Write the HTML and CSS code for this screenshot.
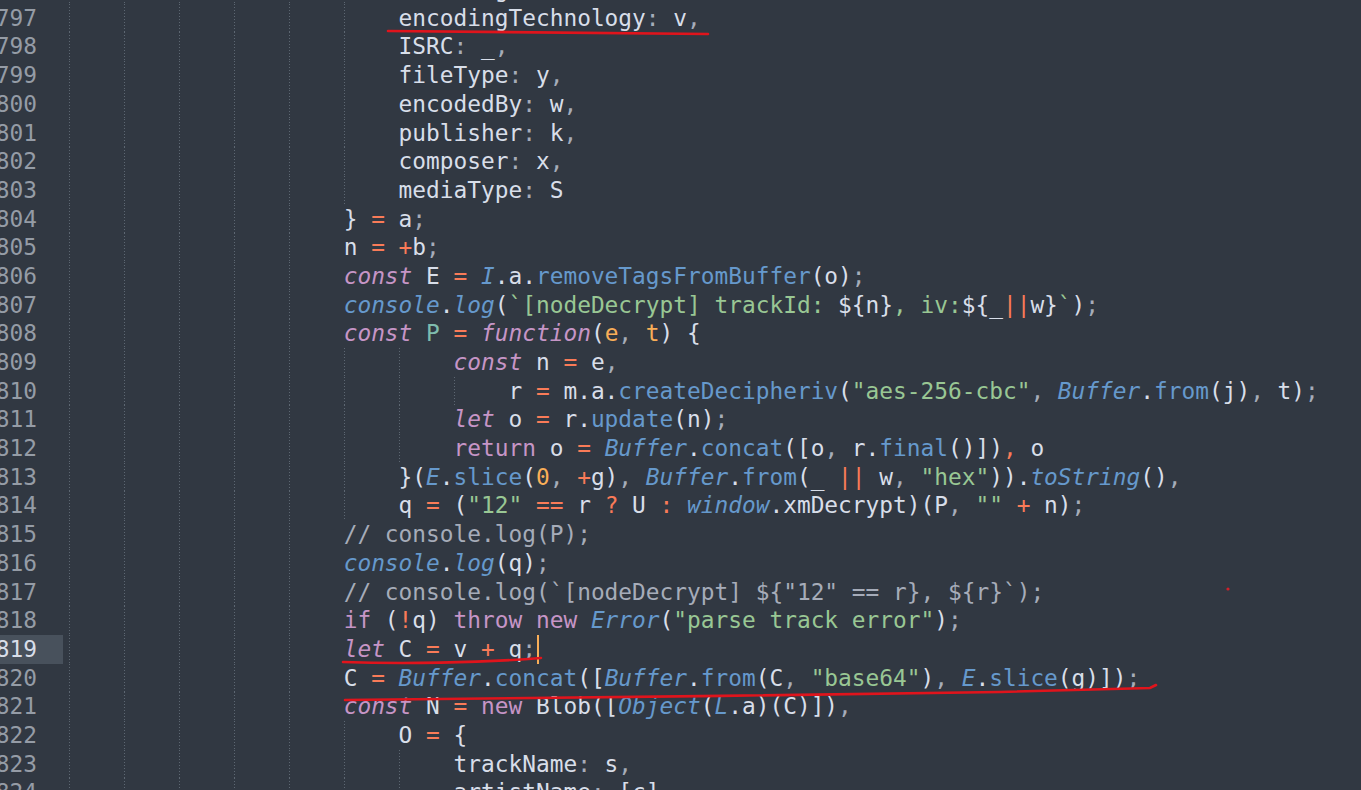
FILE: index.html
```html
<!DOCTYPE html>
<html>
<head>
<meta charset="utf-8">
<link rel="stylesheet" href="styles.css">
</head>
<body>
<div class="editor">
<div class="row"><span class="ln">796</span><span class="code"><span class="ind i6"></span>album<span class="pu">:</span> g<span class="pu">,</span></span></div>
<div class="row"><span class="ln">797</span><span class="code"><span class="ind i6"></span>encodingTechnology<span class="pu">:</span> v<span class="pu">,</span></span></div>
<div class="row"><span class="ln">798</span><span class="code"><span class="ind i6"></span>ISRC<span class="pu">:</span> _<span class="pu">,</span></span></div>
<div class="row"><span class="ln">799</span><span class="code"><span class="ind i6"></span>fileType<span class="pu">:</span> y<span class="pu">,</span></span></div>
<div class="row"><span class="ln">800</span><span class="code"><span class="ind i6"></span>encodedBy<span class="pu">:</span> w<span class="pu">,</span></span></div>
<div class="row"><span class="ln">801</span><span class="code"><span class="ind i6"></span>publisher<span class="pu">:</span> k<span class="pu">,</span></span></div>
<div class="row"><span class="ln">802</span><span class="code"><span class="ind i6"></span>composer<span class="pu">:</span> x<span class="pu">,</span></span></div>
<div class="row"><span class="ln">803</span><span class="code"><span class="ind i6"></span>mediaType<span class="pu">:</span> S</span></div>
<div class="row"><span class="ln">804</span><span class="code"><span class="ind i5"></span>} <span class="o">=</span> a<span class="pu">;</span></span></div>
<div class="row"><span class="ln">805</span><span class="code"><span class="ind i5"></span>n <span class="o">=</span> <span class="o">+</span>b<span class="pu">;</span></span></div>
<div class="row"><span class="ln">806</span><span class="code"><span class="ind i5"></span><span class="k">const</span> E <span class="o">=</span> <span class="fi">I</span>.a.<span class="f">removeTagsFromBuffer</span>(o)<span class="pu">;</span></span></div>
<div class="row"><span class="ln">807</span><span class="code"><span class="ind i5"></span><span class="fi">console</span>.<span class="fi">log</span>(<span class="s">`[nodeDecrypt] trackId: </span>${n}<span class="s">, iv:</span>${_<span class="o">||</span>w}<span class="s">`</span>)<span class="pu">;</span></span></div>
<div class="row"><span class="ln">808</span><span class="code"><span class="ind i5"></span><span class="k">const</span> <span class="fn">P</span> <span class="o">=</span> <span class="k">function</span>(<span class="p">e</span><span class="pu">,</span> <span class="p">t</span>) {</span></div>
<div class="row"><span class="ln">809</span><span class="code"><span class="ind i7"></span><span class="k">const</span> n <span class="o">=</span> e<span class="pu">,</span></span></div>
<div class="row"><span class="ln">810</span><span class="code"><span class="ind i8"></span>r <span class="o">=</span> m.a.<span class="f">createDecipheriv</span>(<span class="s">"aes-256-cbc"</span><span class="pu">,</span> <span class="fi">Buffer</span>.<span class="f">from</span>(j)<span class="pu">,</span> t)<span class="pu">;</span></span></div>
<div class="row"><span class="ln">811</span><span class="code"><span class="ind i7"></span><span class="k">let</span> o <span class="o">=</span> r.<span class="f">update</span>(n)<span class="pu">;</span></span></div>
<div class="row"><span class="ln">812</span><span class="code"><span class="ind i7"></span><span class="kw">return</span> o <span class="o">=</span> <span class="fi">Buffer</span>.<span class="f">concat</span>([o<span class="pu">,</span> r.<span class="f">final</span>()])<span class="o">,</span> o</span></div>
<div class="row"><span class="ln">813</span><span class="code"><span class="ind i6"></span>}(<span class="fi">E</span>.<span class="f">slice</span>(<span class="p">0</span><span class="pu">,</span> <span class="o">+</span>g)<span class="pu">,</span> <span class="fi">Buffer</span>.<span class="f">from</span>(_ <span class="o">||</span> w<span class="pu">,</span> <span class="s">"hex"</span>)).<span class="fi">toString</span>()<span class="pu">,</span></span></div>
<div class="row"><span class="ln">814</span><span class="code"><span class="ind i6"></span>q <span class="o">=</span> (<span class="s">"12"</span> <span class="o">==</span> r <span class="o">?</span> U <span class="o">:</span> <span class="fi">window</span>.xmDecrypt)(P<span class="pu">,</span> <span class="s">""</span> <span class="o">+</span> n)<span class="pu">;</span></span></div>
<div class="row"><span class="ln">815</span><span class="code"><span class="ind i5"></span><span class="c">// console.log(P);</span></span></div>
<div class="row"><span class="ln">816</span><span class="code"><span class="ind i5"></span><span class="fi">console</span>.<span class="fi">log</span>(q)<span class="pu">;</span></span></div>
<div class="row"><span class="ln">817</span><span class="code"><span class="ind i5"></span><span class="c">// console.log(`[nodeDecrypt] ${"12" == r}, ${r}`);</span></span></div>
<div class="row"><span class="ln">818</span><span class="code"><span class="ind i5"></span><span class="kw">if</span> (<span class="o">!</span>q) <span class="kw">throw</span> <span class="kw">new</span> <span class="fi">Error</span>(<span class="s">"parse track error"</span>)<span class="pu">;</span></span></div>
<div class="row"><span class="ln cur">819</span><span class="code"><span class="ind i5"></span><span class="k">let</span> C <span class="o">=</span> v <span class="o">+</span> q<span class="pu">;</span><span class="caret"></span></span></div>
<div class="row"><span class="ln">820</span><span class="code"><span class="ind i5"></span>C <span class="o">=</span> <span class="fi">Buffer</span>.<span class="f">concat</span>([<span class="fi">Buffer</span>.<span class="f">from</span>(C<span class="pu">,</span> <span class="s">"base64"</span>)<span class="pu">,</span> <span class="fi">E</span>.<span class="f">slice</span>(g)])<span class="pu">;</span></span></div>
<div class="row"><span class="ln">821</span><span class="code"><span class="ind i5"></span><span class="k">const</span> N <span class="o">=</span> <span class="kw">new</span> Blob([<span class="fi">Object</span>(<span class="fi">L</span>.a)(C)])<span class="pu">,</span></span></div>
<div class="row"><span class="ln">822</span><span class="code"><span class="ind i6"></span>O <span class="o">=</span> {</span></div>
<div class="row"><span class="ln">823</span><span class="code"><span class="ind i7"></span>trackName<span class="pu">:</span> s<span class="pu">,</span></span></div>
<div class="row"><span class="ln">824</span><span class="code"><span class="ind i7"></span>artistName<span class="pu">:</span> [c]<span class="pu">,</span></span></div>
</div>
<svg class="marks" width="1361" height="790" viewBox="0 0 1361 790">
  <path d="M388 31 C 450 32, 560 33, 708 34" />
  <path d="M343 662 C 400 664, 480 663, 541 658" />
  <path d="M345 700 C 500 699, 800 695, 1000 692 C 1080 690, 1130 689, 1150 688 L 1156 685" />
  <circle cx="1228" cy="589" r="1.6" class="dot" />
</svg>
</body>
</html>
```
FILE: styles.css
```css
html, body {
  margin: 0;
  padding: 0;
  background: #313842;
  overflow: hidden;
}

body {
  width: 1361px;
  height: 790px;
  position: relative;
  font-family: "DejaVu Sans Mono", "Liberation Mono", monospace;
  font-size: 22.82px;
  color: #d8dee9;
}

.editor {
  margin-top: -24.9px;
}

.row {
  display: flex;
  height: 28.69px;
  line-height: 28.69px;
  white-space: pre;
}

.ln {
  flex: none;
  width: 63px;
  box-sizing: border-box;
  padding-right: 26px;
  display: flex;
  justify-content: flex-end;
  color: #959ca6;
}

.ln.cur {
  background: #48515c;
  color: #d8dee9;
}

.code {
  margin-left: 6px;
}

.ind {
  display: inline-block;
  height: 28.69px;
  vertical-align: top;
  background-image: repeating-linear-gradient(to right, #5d6772 0 1px, transparent 1px 4ch);
  -webkit-mask-image: repeating-linear-gradient(to bottom, #000 0 1px, transparent 1px 3px);
  mask-image: repeating-linear-gradient(to bottom, #000 0 1px, transparent 1px 3px);
}

.i5 { width: 20ch; }
.i6 { width: 24ch; }
.i7 { width: 28ch; }
.i8 { width: 32ch; }

.k { color: #c695c6; font-style: italic; }
.kw { color: #c695c6; }
.o { color: #f97b58; }
.s { color: #99c794; }
.f { color: #6699cc; }
.fi { color: #6699cc; font-style: italic; }
.fn { color: #7fbcae; }
.p { color: #f9ae58; }
.c { color: #a6acb9; }
.pu { color: #a6acb9; }

.caret {
  display: inline-block;
  width: 2px;
  height: 28.69px;
  margin-left: 1px;
  vertical-align: top;
  background: #f9ae58;
}

.marks {
  position: absolute;
  top: 0;
  left: 0;
  pointer-events: none;
}

.marks path {
  fill: none;
  stroke: #e0141c;
  stroke-width: 2.6;
  stroke-linecap: round;
}

.marks .dot {
  fill: #d0202a;
}
```
